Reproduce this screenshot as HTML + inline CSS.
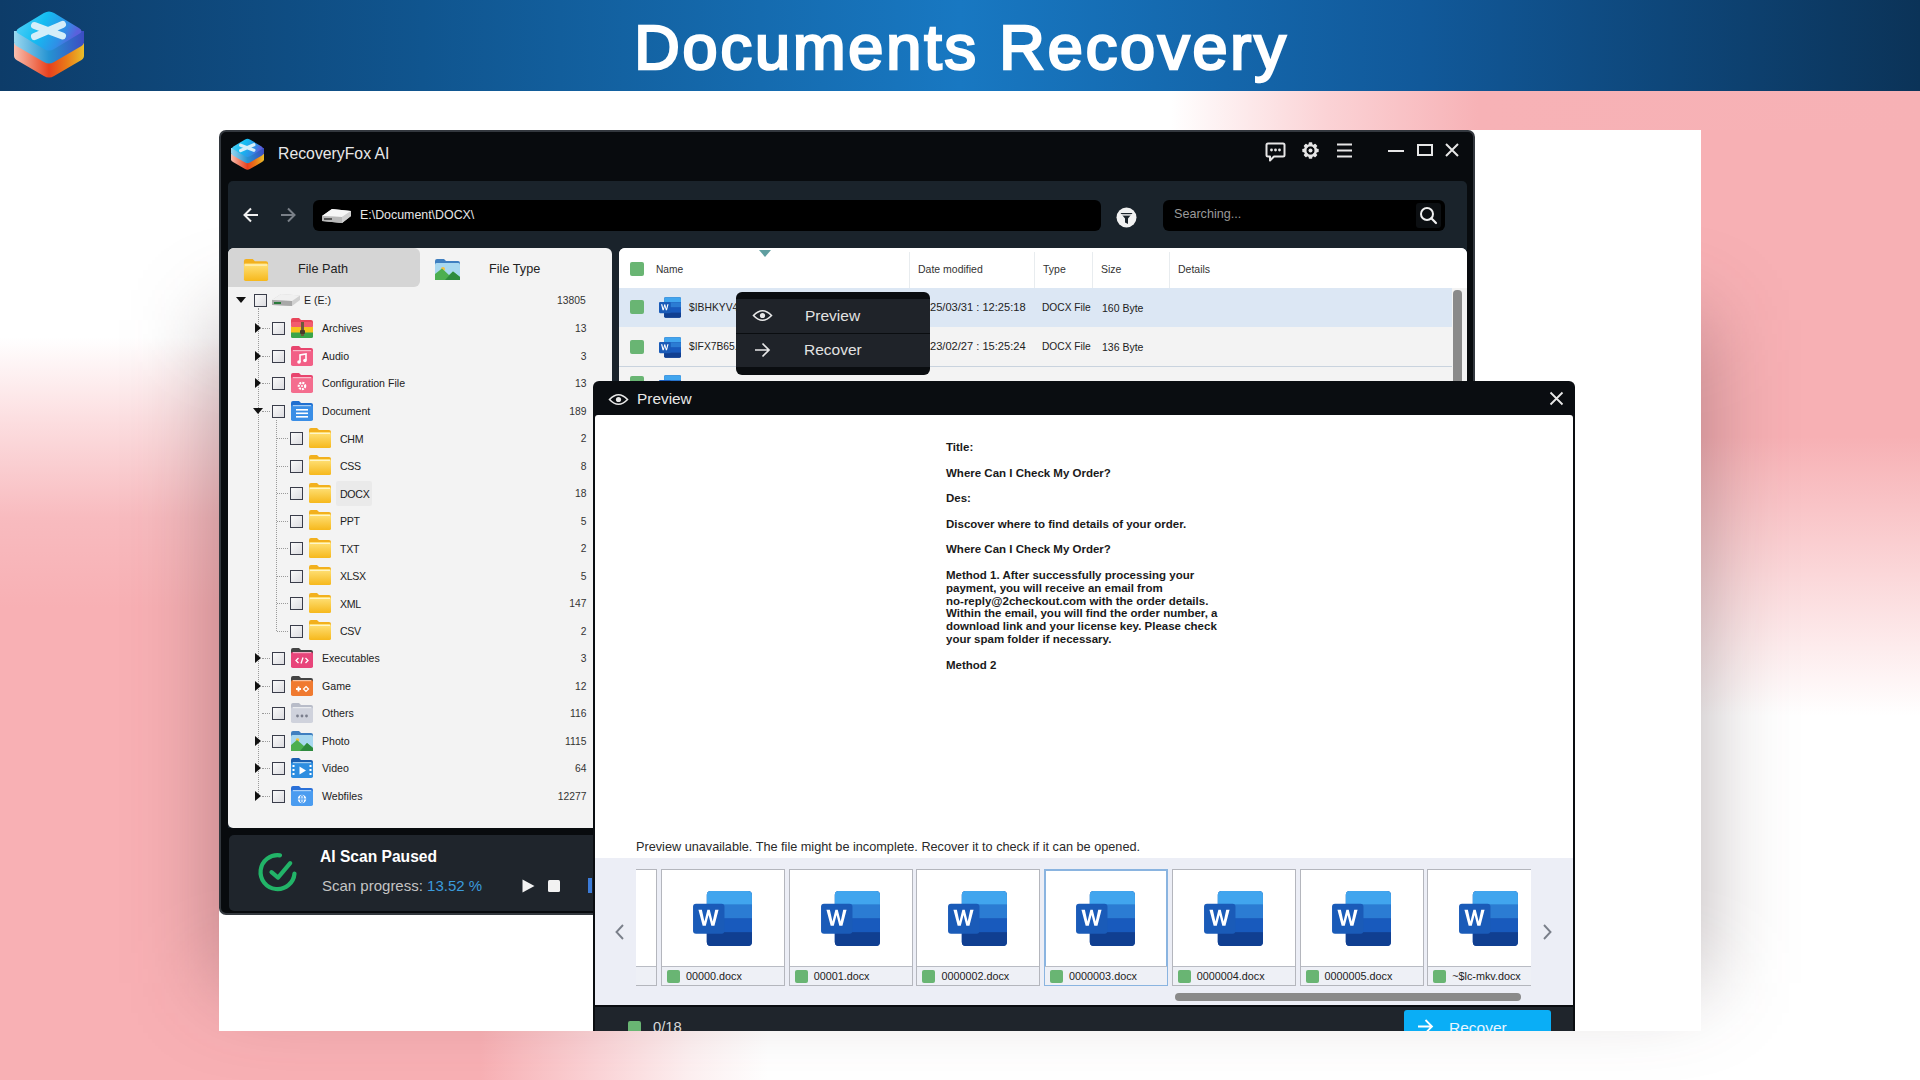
<!DOCTYPE html><html><head><meta charset="utf-8"><style>
*{margin:0;padding:0;box-sizing:border-box}
html,body{width:1920px;height:1080px;overflow:hidden;font-family:"Liberation Sans",sans-serif}
body{position:relative;background:#fff}
.a{position:absolute}
svg{display:block;overflow:visible}
#header{position:absolute;left:0;top:0;width:1920px;height:91px;
background:linear-gradient(90deg,#0d3c69 0%,#10558f 22%,#1878c2 50%,#11599a 74%,#0b3358 100%)}
#title{position:absolute;left:0;top:0;width:1920px;text-align:center;color:#fff;font-weight:normal;font-size:63px;line-height:91px;padding-top:2px;letter-spacing:2.9px;-webkit-text-stroke:2.6px #fff;text-indent:2.9px}
#wbox{position:absolute;left:219px;top:130px;width:1482px;height:901px;background:#fff;overflow:hidden;
}
#inner{position:absolute;left:-219px;top:-130px;width:1920px;height:1080px}
.t{position:absolute;white-space:nowrap;line-height:1}
.cb{position:absolute;width:13px;height:13px;border:1.3px solid #3a3d4a;background:linear-gradient(135deg,#fafafa,#dcdce0)}
.gs{position:absolute;width:14px;height:14px;background:#69b573;border-radius:2px}
</style></head><body>

<svg width="0" height="0" style="position:absolute">
<defs>
 <linearGradient id="lgTop" x1="0" y1="0" x2="1" y2="0.3"><stop offset="0" stop-color="#5cd2f6"/><stop offset="0.45" stop-color="#14bdf2"/><stop offset="0.8" stop-color="#2f8fe6"/><stop offset="1" stop-color="#5a60dc"/></linearGradient>
 <linearGradient id="lgBlue" x1="0" y1="0" x2="1" y2="0"><stop offset="0" stop-color="#9ad8ef"/><stop offset="0.5" stop-color="#2593d2"/><stop offset="1" stop-color="#3c4cc2"/></linearGradient>
 <linearGradient id="lgRed" x1="0" y1="0" x2="1" y2="0"><stop offset="0" stop-color="#f9c0b0"/><stop offset="0.5" stop-color="#e8401c"/><stop offset="0.75" stop-color="#ea7a18"/><stop offset="1" stop-color="#e9be2a"/></linearGradient>
 <linearGradient id="lgBL" x1="0" y1="0" x2="1" y2="0"><stop offset="0" stop-color="#7fd0ee"/><stop offset="1" stop-color="#1f8fd0"/></linearGradient>
 <linearGradient id="lgBR" x1="0" y1="0" x2="1" y2="0"><stop offset="0" stop-color="#2a7cd0"/><stop offset="1" stop-color="#3b55c8"/></linearGradient>
 <linearGradient id="lgRL" x1="0" y1="0" x2="1" y2="0"><stop offset="0" stop-color="#f7b0a0"/><stop offset="1" stop-color="#e03a10"/></linearGradient>
 <linearGradient id="lgRR" x1="0" y1="0" x2="1" y2="0"><stop offset="0" stop-color="#e85a10"/><stop offset="1" stop-color="#e8b020"/></linearGradient>
 <linearGradient id="lgFold" x1="0" y1="0" x2="0" y2="1"><stop offset="0" stop-color="#ffe27a"/><stop offset="1" stop-color="#f6b81c"/></linearGradient>
 <linearGradient id="lgDrive" x1="0" y1="0" x2="0" y2="1"><stop offset="0" stop-color="#f4f4f4"/><stop offset="1" stop-color="#bdbdbd"/></linearGradient>
 <symbol id="logo" viewBox="0 0 70 70">
  <path d="M0 33 L0 46 Q0 49 5.1 51.5 L29.9 66 Q35 69 40.1 66 L64.9 51.5 Q70 49 70 46 L70 33 Z" fill="url(#lgRed)"/>
  <path d="M0 21 L0 32 Q0 35 5.1 37.5 L29.9 52 Q35 55 40.1 52 L64.9 37.5 Q70 35 70 32 L70 21 Z" fill="url(#lgBlue)"/>
  <path d="M5.1 17.9 L29.9 3.1 Q35 0 40.1 3.1 L64.9 17.9 Q70 21 64.9 24.1 L40.1 38.9 Q35 42 29.9 38.9 L5.1 24.1 Q0 21 5.1 17.9 Z" fill="url(#lgTop)"/>
  <path d="M20.5 15.5 L48.5 26 M20.5 26.5 L48.5 14.5" stroke="#d4eef9" stroke-width="7" stroke-linecap="round"/>
 </symbol>
 <symbol id="word" viewBox="0 0 60 56">
  <rect x="14" y="0" width="46" height="56" rx="4" fill="#1a4fa8"/>
  <path d="M14 4 Q14 0 18 0 L56 0 Q60 0 60 4 L60 14 L14 14 Z" fill="#41a5ee"/>
  <rect x="14" y="14" width="46" height="14" fill="#2b7cd3"/>
  <rect x="14" y="28" width="46" height="14" fill="#185abd"/>
  <path d="M14 42 L60 42 L60 52 Q60 56 56 56 L18 56 Q14 56 14 52 Z" fill="#103f91"/>
  <rect x="0" y="13" width="32" height="30.5" rx="3" fill="#1a5bb8"/>
  <path d="M5.5 19 L9 19 L11.6 31 L14.6 19 L17 19 L20 31 L22.6 19 L26 19 L21.8 35.5 L18.6 35.5 L15.8 24.5 L13 35.5 L9.8 35.5 Z" fill="#fff"/>
 </symbol>
 <symbol id="yfold" viewBox="0 0 22 20">
  <path d="M0 2 Q0 0 2 0 L8 0 L10 2 L20 2 Q22 2 22 4 L22 6 L0 6 Z" fill="#f2b01e"/>
  <path d="M0 5 Q0 4 1.5 4 L20.5 4 Q22 4 22 5.5 L22 18.5 Q22 20 20.5 20 L1.5 20 Q0 20 0 18.5 Z" fill="url(#lgFold)"/>
  <rect x="1" y="5" width="20" height="1" fill="#fff5c8"/>
 </symbol>
</defs>
</svg>

<div class="a" style="left:0px;top:91px;width:1920px;height:39px;background:linear-gradient(90deg,#fff 0%,#fff 61%,#fbd3d6 69%,#f7b2b6 77%,#f7b1b5 100%);"></div>
<div class="a" style="left:0px;top:130px;width:219px;height:901px;background:linear-gradient(180deg,#fff 0%,#fff 23%,#fcdfe1 32%,#f8bbbf 43%,#f8b0b4 53%,#f8b0b4 100%);"></div>
<div class="a" style="left:1701px;top:130px;width:219px;height:901px;background:linear-gradient(180deg,#f7b0b4 0%,#f7b0b4 34%,#fff 65%,#fff 100%);"></div>
<div class="a" style="left:0px;top:1031px;width:1920px;height:49px;background:linear-gradient(90deg,#f8b0b4 0%,#f8b0b4 25%,#fbd3d6 31%,#fdf0f1 36%,#fff 40%,#fff 100%);"></div>
<div class="a" style="left:219px;top:320px;width:1482px;height:663px;background:rgba(60,40,45,0.36);filter:blur(45px)"></div>
<div id="header">
<svg class="a" style="left:14px;top:10px" width="70" height="70"><use href="#logo"/></svg>
<div id="title">Documents Recovery</div></div>
<div id="wbox"><div id="inner">
<div class="a" style="left:219px;top:130px;width:1256px;height:785px;background:#080b0e;border:2px solid #33383e;border-radius:7px"></div>
<svg class="a" style="left:231px;top:138px" width="33" height="33"><use href="#logo"/></svg>
<div class="t" style="left:278px;top:146px;font-size:15.8px;color:#e8e8e8;">RecoveryFox AI</div>
<svg class="a" style="left:1265px;top:142px" width="21" height="20" viewBox="0 0 21 20"><path d="M3 1.5 H18 Q19.5 1.5 19.5 3 V13 Q19.5 14.5 18 14.5 H9 L5 18.5 V14.5 H3 Q1.5 14.5 1.5 13 V3 Q1.5 1.5 3 1.5 Z" fill="none" stroke="#e6e6e6" stroke-width="2" stroke-linejoin="round"/><circle cx="6.5" cy="8" r="1.4" fill="#e6e6e6"/><circle cx="10.5" cy="8" r="1.4" fill="#e6e6e6"/><circle cx="14.5" cy="8" r="1.4" fill="#e6e6e6"/></svg>
<svg class="a" style="left:1302px;top:142px" width="17" height="17" viewBox="0 0 17 17"><g transform="translate(8.5,8.5)"><rect x="-1.8" y="-8.2" width="3.6" height="4" rx="0.8" fill="#e6e6e6" transform="rotate(0)"/><rect x="-1.8" y="-8.2" width="3.6" height="4" rx="0.8" fill="#e6e6e6" transform="rotate(45)"/><rect x="-1.8" y="-8.2" width="3.6" height="4" rx="0.8" fill="#e6e6e6" transform="rotate(90)"/><rect x="-1.8" y="-8.2" width="3.6" height="4" rx="0.8" fill="#e6e6e6" transform="rotate(135)"/><rect x="-1.8" y="-8.2" width="3.6" height="4" rx="0.8" fill="#e6e6e6" transform="rotate(180)"/><rect x="-1.8" y="-8.2" width="3.6" height="4" rx="0.8" fill="#e6e6e6" transform="rotate(225)"/><rect x="-1.8" y="-8.2" width="3.6" height="4" rx="0.8" fill="#e6e6e6" transform="rotate(270)"/><rect x="-1.8" y="-8.2" width="3.6" height="4" rx="0.8" fill="#e6e6e6" transform="rotate(315)"/><circle r="5.4" fill="none" stroke="#e6e6e6" stroke-width="2.4"/><circle r="2" fill="#e6e6e6"/></g></svg>
<svg class="a" style="left:1337px;top:143px" width="16" height="15" viewBox="0 0 16 15"><rect x="0" y="0.5" width="15" height="2" fill="#e6e6e6"/><rect x="0" y="6.5" width="15" height="2" fill="#e6e6e6"/><rect x="0" y="12.5" width="15" height="2" fill="#e6e6e6"/></svg>
<div class="a" style="left:1388px;top:150px;width:16px;height:2px;background:#e6e6e6;"></div>
<div class="a" style="left:1417px;top:144px;width:16px;height:12px;background:transparent;border:2px solid #e6e6e6"></div>
<svg class="a" style="left:1445px;top:143px" width="14" height="14" viewBox="0 0 14 14"><path d="M1 1 L13 13 M13 1 L1 13" stroke="#e6e6e6" stroke-width="2"/></svg>
<div class="a" style="left:228px;top:181px;width:1239px;height:647px;background:#1a232b;border-radius:5px 5px 0 0"></div>
<svg class="a" style="left:243px;top:207px" width="16" height="16" viewBox="0 0 16 16"><path d="M15 8 H2 M8 1.5 L1.5 8 L8 14.5" fill="none" stroke="#f0f0f0" stroke-width="2"/></svg>
<svg class="a" style="left:280px;top:207px" width="16" height="16" viewBox="0 0 16 16"><path d="M1 8 H14 M8 1.5 L14.5 8 L8 14.5" fill="none" stroke="#7a8088" stroke-width="2"/></svg>
<div class="a" style="left:313px;top:200px;width:788px;height:31px;background:#000;border-radius:6px"></div>
<svg class="a" style="left:321px;top:207px" width="31" height="17" viewBox="0 0 31 17"><path d="M1 9 L11 2 L30 4 L30 9 L21 16 L1 14 Z" fill="#d8d8d8"/><path d="M1 9 L11 2 L30 4 L21 10 Z" fill="#f6f6f6"/><path d="M1 9 L21 10 L21 16 L1 14 Z" fill="#b8b8b8"/><path d="M21 10 L30 4 L30 9 L21 16 Z" fill="#cfcfcf"/><rect x="3" y="11" width="8" height="2" fill="#555"/></svg>
<div class="t" style="left:360px;top:209px;font-size:12.4px;color:#e6e6e6;">E:\Document\DOCX\</div>
<svg class="a" style="left:1116px;top:207px" width="21" height="21" viewBox="0 0 21 21"><circle cx="10.5" cy="10.5" r="10" fill="#f2f2f2"/><path d="M4.5 6 H16.5 L12 11.5 V17 L9 15.5 V11.5 Z" fill="#1b232a"/><rect x="5" y="7.2" width="11" height="1.4" fill="#f2f2f2"/></svg>
<div class="a" style="left:1163px;top:200px;width:282px;height:31px;background:#000;border-radius:6px"></div>
<div class="a" style="left:1416px;top:203px;width:25px;height:25px;background:#0c0f12;border-radius:3px"></div>
<div class="t" style="left:1174px;top:208px;font-size:12.6px;color:#9a9a9a;">Searching...</div>
<svg class="a" style="left:1419px;top:206px" width="19" height="19" viewBox="0 0 19 19"><circle cx="8" cy="8" r="6" fill="none" stroke="#f0f0f0" stroke-width="2"/><path d="M12.3 12.3 L17 17" stroke="#f0f0f0" stroke-width="2.2" stroke-linecap="round"/></svg>
<div class="a" style="left:228px;top:248px;width:384px;height:580px;background:#f3f3f3;border-radius:6px 6px 0 5px"></div>
<div class="a" style="left:228px;top:248px;width:192px;height:39px;background:#d5d5d5;border-radius:6px 6px 6px 0"></div>
<svg class="a" style="left:243px;top:259px" width="26" height="22"><use href="#yfold"/></svg>
<div class="t" style="left:298px;top:262.5px;font-size:12.7px;color:#222;">File Path</div>
<svg class="a" style="left:435px;top:259px" width="25" height="21" viewBox="0 0 25 21"><path d="M0 2 Q0 0 2 0 L9 0 L11 2 L23 2 Q25 2 25 4 L25 6 L0 6 Z" fill="#3f7fc0"/><rect x="0" y="4" width="25" height="17" rx="1.5" fill="#a8d8f0"/><circle cx="8" cy="10" r="2" fill="#f6c342"/><path d="M0 21 L0 15 L7 9.5 L14 16 L18 12.5 L25 18 L25 21 Z" fill="#4caf50"/><path d="M10 21 L18 12.5 L25 18 L25 21 Z" fill="#2e8b3e"/></svg>
<div class="t" style="left:489px;top:262.5px;font-size:12.7px;color:#222;">File Type</div>
<div class="a" style="left:258px;top:308px;width:0;height:488px;border-left:1px dotted #9a9a9a"></div>
<div class="a" style="left:276px;top:420px;width:0;height:211px;border-left:1px dotted #9a9a9a"></div>
<svg class="a" style="left:236px;top:297px" width="10" height="6" viewBox="0 0 10 6"><path d="M0 0 L10 0 L5 6 Z" fill="#111"/></svg>
<div class="cb" style="left:254px;top:294px"></div>
<svg class="a" style="left:271px;top:292px" width="30" height="16" viewBox="0 0 30 16"><path d="M1 8 L10 2 L29 3.5 L29 8 L21 14 L1 13 Z" fill="#d0d0d0"/><path d="M1 8 L10 2 L29 3.5 L21 9 Z" fill="#f0f0f0"/><path d="M1 8 L21 9 L21 14 L1 13 Z" fill="#a8a8a8"/><rect x="3" y="10" width="7" height="2" fill="#2a7a3a"/></svg>
<div class="t" style="left:304px;top:295px;font-size:10.6px;color:#222;">E (E:)</div>
<div class="t" style="left:557px;top:296px;font-size:10.3px;color:#333;">13805</div>
<svg class="a" style="left:255px;top:323.0px" width="6" height="10" viewBox="0 0 6 10"><path d="M0 0 L6 5 L0 10 Z" fill="#111"/></svg>
<div class="a" style="left:262px;top:328.0px;width:8px;border-top:1px dotted #9a9a9a"></div>
<div class="cb" style="left:272px;top:322.0px"></div>
<svg class="a" style="left:291px;top:318.0px" width="22" height="20" viewBox="0 0 22 20"><path d="M0 2 Q0 0 2 0 L8 0 L10 2 L20 2 Q22 2 22 4 L22 7 L0 7 Z" fill="#e8455a"/><rect x="0" y="4" width="22" height="5.5" rx="1.5" fill="#f25c6e"/><rect x="0" y="9" width="22" height="6" fill="#f6c21c"/><path d="M0 14.5 H22 V18.5 Q22 20 20.5 20 H1.5 Q0 20 0 18.5 Z" fill="#3aa548"/><rect x="10" y="4" width="3" height="14" fill="#6b5a3a"/><rect x="9" y="12" width="5" height="4" rx="1" fill="#4a3a2a"/></svg>
<div class="t" style="left:322px;top:323.0px;font-size:10.6px;color:#222;">Archives</div>
<div class="t" style="right:1333.5px;top:324.0px;font-size:10.3px;color:#333">13</div>
<svg class="a" style="left:255px;top:350.5px" width="6" height="10" viewBox="0 0 6 10"><path d="M0 0 L6 5 L0 10 Z" fill="#111"/></svg>
<div class="a" style="left:262px;top:355.5px;width:8px;border-top:1px dotted #9a9a9a"></div>
<div class="cb" style="left:272px;top:349.5px"></div>
<svg class="a" style="left:291px;top:345.5px" width="22" height="20" viewBox="0 0 22 20"><path d="M0 2 Q0 0 2 0 L8 0 L10 2 L20 2 Q22 2 22 4 L22 7 L0 7 Z" fill="#e8456e"/><rect x="0" y="4" width="22" height="16" rx="1.8" fill="#f25f86"/><rect x="2" y="4" width="18" height="1.2" fill="#ffffff" opacity="0.55"/><path d="M9 16 V9 L15 8 V14" fill="none" stroke="#fff" stroke-width="1.6"/><circle cx="8" cy="16" r="1.8" fill="#fff"/><circle cx="14" cy="14.5" r="1.8" fill="#fff"/></svg>
<div class="t" style="left:322px;top:350.5px;font-size:10.6px;color:#222;">Audio</div>
<div class="t" style="right:1333.5px;top:351.5px;font-size:10.3px;color:#333">3</div>
<svg class="a" style="left:255px;top:378.0px" width="6" height="10" viewBox="0 0 6 10"><path d="M0 0 L6 5 L0 10 Z" fill="#111"/></svg>
<div class="a" style="left:262px;top:383.0px;width:8px;border-top:1px dotted #9a9a9a"></div>
<div class="cb" style="left:272px;top:377.0px"></div>
<svg class="a" style="left:291px;top:373.0px" width="22" height="20" viewBox="0 0 22 20"><path d="M0 2 Q0 0 2 0 L8 0 L10 2 L20 2 Q22 2 22 4 L22 7 L0 7 Z" fill="#e8456e"/><rect x="0" y="4" width="22" height="16" rx="1.8" fill="#f46d8e"/><rect x="2" y="4" width="18" height="1.2" fill="#ffffff" opacity="0.55"/><circle cx="11" cy="13" r="3.2" fill="none" stroke="#fff" stroke-width="2.2" stroke-dasharray="2 1"/><circle cx="11" cy="13" r="1" fill="#fff"/></svg>
<div class="t" style="left:322px;top:378.0px;font-size:10.6px;color:#222;">Configuration File</div>
<div class="t" style="right:1333.5px;top:379.0px;font-size:10.3px;color:#333">13</div>
<svg class="a" style="left:253px;top:407.5px" width="10" height="6" viewBox="0 0 10 6"><path d="M0 0 L10 0 L5 6 Z" fill="#111"/></svg>
<div class="a" style="left:262px;top:410.5px;width:8px;border-top:1px dotted #9a9a9a"></div>
<div class="cb" style="left:272px;top:404.5px"></div>
<svg class="a" style="left:291px;top:400.5px" width="22" height="20" viewBox="0 0 22 20"><path d="M0 2 Q0 0 2 0 L8 0 L10 2 L20 2 Q22 2 22 4 L22 7 L0 7 Z" fill="#1f6fd0"/><rect x="0" y="4" width="22" height="16" rx="1.8" fill="#3a8ee6"/><rect x="2" y="4" width="18" height="1.2" fill="#ffffff" opacity="0.55"/><rect x="5" y="8" width="12" height="1.6" fill="#fff"/><rect x="5" y="11.5" width="12" height="1.6" fill="#fff"/><rect x="5" y="15" width="12" height="1.6" fill="#fff"/></svg>
<div class="t" style="left:322px;top:405.5px;font-size:10.6px;color:#222;">Document</div>
<div class="t" style="right:1333.5px;top:406.5px;font-size:10.3px;color:#333">189</div>
<div class="a" style="left:277px;top:438.0px;width:11px;border-top:1px dotted #9a9a9a"></div>
<div class="cb" style="left:290px;top:432.0px"></div>
<svg class="a" style="left:309px;top:428px" width="22" height="20"><use href="#yfold"/></svg>
<div class="t" style="left:340px;top:433.5px;font-size:10.6px;color:#222;letter-spacing:-0.3px">CHM</div>
<div class="t" style="right:1333.5px;top:434.0px;font-size:10.3px;color:#333">2</div>
<div class="a" style="left:277px;top:465.5px;width:11px;border-top:1px dotted #9a9a9a"></div>
<div class="cb" style="left:290px;top:459.5px"></div>
<svg class="a" style="left:309px;top:455px" width="22" height="20"><use href="#yfold"/></svg>
<div class="t" style="left:340px;top:461.0px;font-size:10.6px;color:#222;letter-spacing:-0.3px">CSS</div>
<div class="t" style="right:1333.5px;top:461.5px;font-size:10.3px;color:#333">8</div>
<div class="a" style="left:277px;top:493.0px;width:11px;border-top:1px dotted #9a9a9a"></div>
<div class="cb" style="left:290px;top:487.0px"></div>
<svg class="a" style="left:309px;top:483px" width="22" height="20"><use href="#yfold"/></svg>
<div class="t" style="left:340px;top:488.5px;font-size:10.6px;color:#222;letter-spacing:-0.3px">DOCX</div>
<div class="t" style="right:1333.5px;top:489.0px;font-size:10.3px;color:#333">18</div>
<div class="a" style="left:277px;top:520.5px;width:11px;border-top:1px dotted #9a9a9a"></div>
<div class="cb" style="left:290px;top:514.5px"></div>
<svg class="a" style="left:309px;top:510px" width="22" height="20"><use href="#yfold"/></svg>
<div class="t" style="left:340px;top:516.0px;font-size:10.6px;color:#222;letter-spacing:-0.3px">PPT</div>
<div class="t" style="right:1333.5px;top:516.5px;font-size:10.3px;color:#333">5</div>
<div class="a" style="left:277px;top:548.0px;width:11px;border-top:1px dotted #9a9a9a"></div>
<div class="cb" style="left:290px;top:542.0px"></div>
<svg class="a" style="left:309px;top:538px" width="22" height="20"><use href="#yfold"/></svg>
<div class="t" style="left:340px;top:543.5px;font-size:10.6px;color:#222;letter-spacing:-0.3px">TXT</div>
<div class="t" style="right:1333.5px;top:544.0px;font-size:10.3px;color:#333">2</div>
<div class="a" style="left:277px;top:575.5px;width:11px;border-top:1px dotted #9a9a9a"></div>
<div class="cb" style="left:290px;top:569.5px"></div>
<svg class="a" style="left:309px;top:565px" width="22" height="20"><use href="#yfold"/></svg>
<div class="t" style="left:340px;top:571.0px;font-size:10.6px;color:#222;letter-spacing:-0.3px">XLSX</div>
<div class="t" style="right:1333.5px;top:571.5px;font-size:10.3px;color:#333">5</div>
<div class="a" style="left:277px;top:603.0px;width:11px;border-top:1px dotted #9a9a9a"></div>
<div class="cb" style="left:290px;top:597.0px"></div>
<svg class="a" style="left:309px;top:593px" width="22" height="20"><use href="#yfold"/></svg>
<div class="t" style="left:340px;top:598.5px;font-size:10.6px;color:#222;letter-spacing:-0.3px">XML</div>
<div class="t" style="right:1333.5px;top:599.0px;font-size:10.3px;color:#333">147</div>
<div class="a" style="left:277px;top:630.5px;width:11px;border-top:1px dotted #9a9a9a"></div>
<div class="cb" style="left:290px;top:624.5px"></div>
<svg class="a" style="left:309px;top:620px" width="22" height="20"><use href="#yfold"/></svg>
<div class="t" style="left:340px;top:626.0px;font-size:10.6px;color:#222;letter-spacing:-0.3px">CSV</div>
<div class="t" style="right:1333.5px;top:626.5px;font-size:10.3px;color:#333">2</div>
<svg class="a" style="left:255px;top:653.0px" width="6" height="10" viewBox="0 0 6 10"><path d="M0 0 L6 5 L0 10 Z" fill="#111"/></svg>
<div class="a" style="left:262px;top:658.0px;width:8px;border-top:1px dotted #9a9a9a"></div>
<div class="cb" style="left:272px;top:652.0px"></div>
<svg class="a" style="left:291px;top:648.0px" width="22" height="20" viewBox="0 0 22 20"><path d="M0 2 Q0 0 2 0 L8 0 L10 2 L20 2 Q22 2 22 4 L22 7 L0 7 Z" fill="#444"/><rect x="0" y="4" width="22" height="16" rx="1.8" fill="#e8457a"/><rect x="2" y="4" width="18" height="1.2" fill="#ffffff" opacity="0.55"/><path d="M7.5 10 L5 12.5 L7.5 15 M14.5 10 L17 12.5 L14.5 15 M12 9.5 L10 15.5" fill="none" stroke="#fff" stroke-width="1.3"/></svg>
<div class="t" style="left:322px;top:653.0px;font-size:10.6px;color:#222;">Executables</div>
<div class="t" style="right:1333.5px;top:654.0px;font-size:10.3px;color:#333">3</div>
<svg class="a" style="left:255px;top:680.5px" width="6" height="10" viewBox="0 0 6 10"><path d="M0 0 L6 5 L0 10 Z" fill="#111"/></svg>
<div class="a" style="left:262px;top:685.5px;width:8px;border-top:1px dotted #9a9a9a"></div>
<div class="cb" style="left:272px;top:679.5px"></div>
<svg class="a" style="left:291px;top:675.5px" width="22" height="20" viewBox="0 0 22 20"><path d="M0 2 Q0 0 2 0 L8 0 L10 2 L20 2 Q22 2 22 4 L22 7 L0 7 Z" fill="#444"/><rect x="0" y="4" width="22" height="16" rx="1.8" fill="#f07a30"/><rect x="2" y="4" width="18" height="1.2" fill="#ffffff" opacity="0.55"/><path d="M5 13 H10 M7.5 10.5 V15.5" stroke="#fff" stroke-width="1.8"/><path d="M15 10.5 L17.5 13 L15 15.5 L12.5 13 Z" fill="none" stroke="#fff" stroke-width="1.2"/></svg>
<div class="t" style="left:322px;top:680.5px;font-size:10.6px;color:#222;">Game</div>
<div class="t" style="right:1333.5px;top:681.5px;font-size:10.3px;color:#333">12</div>
<div class="a" style="left:262px;top:713.0px;width:8px;border-top:1px dotted #9a9a9a"></div>
<div class="cb" style="left:272px;top:707.0px"></div>
<svg class="a" style="left:291px;top:703.0px" width="22" height="20" viewBox="0 0 22 20"><path d="M0 2 Q0 0 2 0 L8 0 L10 2 L20 2 Q22 2 22 4 L22 7 L0 7 Z" fill="#b8bcc8"/><rect x="0" y="4" width="22" height="16" rx="1.8" fill="#cfd2dc"/><rect x="2" y="4" width="18" height="1.2" fill="#ffffff" opacity="0.55"/><circle cx="6.5" cy="13" r="1.4" fill="#7a7e8c"/><circle cx="11" cy="13" r="1.4" fill="#7a7e8c"/><circle cx="15.5" cy="13" r="1.4" fill="#7a7e8c"/></svg>
<div class="t" style="left:322px;top:708.0px;font-size:10.6px;color:#222;">Others</div>
<div class="t" style="right:1333.5px;top:709.0px;font-size:10.3px;color:#333">116</div>
<svg class="a" style="left:255px;top:735.5px" width="6" height="10" viewBox="0 0 6 10"><path d="M0 0 L6 5 L0 10 Z" fill="#111"/></svg>
<div class="a" style="left:262px;top:740.5px;width:8px;border-top:1px dotted #9a9a9a"></div>
<div class="cb" style="left:272px;top:734.5px"></div>
<svg class="a" style="left:291px;top:730.5px" width="22" height="20" viewBox="0 0 22 20"><path d="M0 2 Q0 0 2 0 L8 0 L10 2 L20 2 Q22 2 22 4 L22 7 L0 7 Z" fill="#3f7fc0"/><rect x="0" y="4" width="22" height="16" rx="1.5" fill="#a8d8f0"/><circle cx="6.5" cy="9" r="1.8" fill="#f6c342"/><path d="M0 20 L0 14 L6 9 L13 15 L16 12 L22 17 L22 20 Z" fill="#4caf50"/><path d="M9 20 L16 12 L22 17 L22 20 Z" fill="#2e8b3e"/></svg>
<div class="t" style="left:322px;top:735.5px;font-size:10.6px;color:#222;">Photo</div>
<div class="t" style="right:1333.5px;top:736.5px;font-size:10.3px;color:#333">1115</div>
<svg class="a" style="left:255px;top:763.0px" width="6" height="10" viewBox="0 0 6 10"><path d="M0 0 L6 5 L0 10 Z" fill="#111"/></svg>
<div class="a" style="left:262px;top:768.0px;width:8px;border-top:1px dotted #9a9a9a"></div>
<div class="cb" style="left:272px;top:762.0px"></div>
<svg class="a" style="left:291px;top:758.0px" width="22" height="20" viewBox="0 0 22 20"><path d="M0 2 Q0 0 2 0 L8 0 L10 2 L20 2 Q22 2 22 4 L22 7 L0 7 Z" fill="#1a5fb0"/><rect x="0" y="4" width="22" height="16" rx="1.8" fill="#2e8ee0"/><rect x="2" y="4" width="18" height="1.2" fill="#ffffff" opacity="0.55"/><path d="M8.5 8.5 L15 12.5 L8.5 16.5 Z" fill="#fff"/><rect x="1.5" y="7" width="2" height="2" fill="#fff"/><rect x="1.5" y="11" width="2" height="2" fill="#fff"/><rect x="1.5" y="15" width="2" height="2" fill="#fff"/><rect x="18.5" y="7" width="2" height="2" fill="#fff"/><rect x="18.5" y="11" width="2" height="2" fill="#fff"/><rect x="18.5" y="15" width="2" height="2" fill="#fff"/></svg>
<div class="t" style="left:322px;top:763.0px;font-size:10.6px;color:#222;">Video</div>
<div class="t" style="right:1333.5px;top:764.0px;font-size:10.3px;color:#333">64</div>
<svg class="a" style="left:255px;top:790.5px" width="6" height="10" viewBox="0 0 6 10"><path d="M0 0 L6 5 L0 10 Z" fill="#111"/></svg>
<div class="a" style="left:262px;top:795.5px;width:8px;border-top:1px dotted #9a9a9a"></div>
<div class="cb" style="left:272px;top:789.5px"></div>
<svg class="a" style="left:291px;top:785.5px" width="22" height="20" viewBox="0 0 22 20"><path d="M0 2 Q0 0 2 0 L8 0 L10 2 L20 2 Q22 2 22 4 L22 7 L0 7 Z" fill="#2a70d8"/><rect x="0" y="4" width="22" height="16" rx="1.8" fill="#4a9cf0"/><rect x="2" y="4" width="18" height="1.2" fill="#ffffff" opacity="0.55"/><circle cx="11" cy="13" r="4.2" fill="#fff"/><path d="M6.8 13 H15.2 M11 8.8 V17.2" stroke="#4a9cf0" stroke-width="0.9"/><ellipse cx="11" cy="13" rx="1.8" ry="4.2" fill="none" stroke="#4a9cf0" stroke-width="0.9"/></svg>
<div class="t" style="left:322px;top:790.5px;font-size:10.6px;color:#222;">Webfiles</div>
<div class="t" style="right:1333.5px;top:791.5px;font-size:10.3px;color:#333">12277</div>
<div class="a" style="left:336px;top:481px;width:36px;height:25px;background:rgba(0,0,0,0.035);border-radius:2px"></div>
<div class="a" style="left:619px;top:248px;width:848px;height:580px;background:#f3f3f3;border-radius:6px 6px 0 0;overflow:hidden">
<div class="a" style="left:0px;top:0px;width:848px;height:40px;background:#fff;"></div>
<div class="a" style="left:0px;top:40px;width:833px;height:39px;background:#dce7f4;"></div>
<div class="a" style="left:0px;top:118px;width:833px;height:1px;background:#c9d3de;"></div>
<div class="a" style="left:290px;top:4px;width:1px;height:36px;background:#e8ecef;"></div>
<div class="a" style="left:415px;top:4px;width:1px;height:36px;background:#e8ecef;"></div>
<div class="a" style="left:473px;top:4px;width:1px;height:36px;background:#e8ecef;"></div>
<div class="a" style="left:550px;top:4px;width:1px;height:36px;background:#e8ecef;"></div>
<svg class="a" style="left:140px;top:2px" width="12" height="7" viewBox="0 0 12 7"><path d="M0 0 L12 0 L6 7 Z" fill="#5f9ea0"/></svg>
<div class="a" style="left:834px;top:42px;width:9px;height:200px;background:#8a8a8a;border-radius:4px"></div>
</div>
<div class="gs" style="left:630px;top:262px"></div>
<div class="t" style="left:656px;top:264.5px;font-size:10.2px;color:#333;">Name</div>
<div class="t" style="left:918px;top:264px;font-size:10.5px;color:#333;">Date modified</div>
<div class="t" style="left:1043px;top:264px;font-size:10.5px;color:#333;">Type</div>
<div class="t" style="left:1101px;top:264px;font-size:10.5px;color:#333;">Size</div>
<div class="t" style="left:1178px;top:264px;font-size:10.5px;color:#333;">Details</div>
<div class="gs" style="left:630px;top:300px"></div>
<svg class="a" style="left:659px;top:297px" width="22" height="21"><use href="#word"/></svg>
<div class="t" style="left:689px;top:302.5px;font-size:10.3px;color:#222;">$IBHKYV4.</div>
<div class="t" style="left:930px;top:301.5px;font-size:11.1px;color:#222;">25/03/31 : 12:25:18</div>
<div class="t" style="left:1042px;top:302.5px;font-size:10.2px;color:#222;">DOCX File</div>
<div class="t" style="left:1102px;top:302.5px;font-size:10.5px;color:#222;">160 Byte</div>
<div class="gs" style="left:630px;top:339.5px"></div>
<svg class="a" style="left:659px;top:336.5px" width="22" height="21"><use href="#word"/></svg>
<div class="t" style="left:689px;top:342.0px;font-size:10.3px;color:#222;">$IFX7B65.</div>
<div class="t" style="left:930px;top:341.0px;font-size:11.1px;color:#222;">23/02/27 : 15:25:24</div>
<div class="t" style="left:1042px;top:342.0px;font-size:10.2px;color:#222;">DOCX File</div>
<div class="t" style="left:1102px;top:342.0px;font-size:10.5px;color:#222;">136 Byte</div>
<div class="gs" style="left:630px;top:376px"></div>
<svg class="a" style="left:659px;top:375px" width="22" height="21"><use href="#word"/></svg>
<div class="a" style="left:736px;top:292px;width:194px;height:83px;background:#0a0d10;border-radius:6px"></div>
<div class="a" style="left:736px;top:299px;width:194px;height:33.5px;background:#1f2329;"></div>
<div class="a" style="left:736px;top:334px;width:194px;height:33px;background:#1f2329;"></div>
<svg class="a" style="left:752px;top:308px" width="21" height="15" viewBox="0 0 21 15"><path d="M1.5 7.5 Q10.5 -2 19.5 7.5 Q10.5 17 1.5 7.5 Z" fill="none" stroke="#e8e8e8" stroke-width="1.6"/><circle cx="10.5" cy="7.5" r="2.6" fill="#e8e8e8"/></svg>
<div class="t" style="left:805px;top:308px;font-size:15.5px;color:#e2e2e2;">Preview</div>
<svg class="a" style="left:754px;top:342px" width="17" height="16" viewBox="0 0 17 16"><path d="M1 8 H15 M8.5 1.5 L15 8 L8.5 14.5" fill="none" stroke="#e8e8e8" stroke-width="1.7"/></svg>
<div class="t" style="left:804px;top:342px;font-size:15.5px;color:#e2e2e2;">Recover</div>
<div class="a" style="left:229px;top:835px;width:380px;height:76px;background:#1f252c;border-radius:5px"></div>
<svg class="a" style="left:258px;top:853px" width="40" height="40" viewBox="0 0 40 40"><path d="M22 2.3 A17 17 0 1 0 36.5 20.5" fill="none" stroke="#22b468" stroke-width="4.2" stroke-linecap="round"/><path d="M13.5 19.2 L20 24.6 L32.2 10.2" fill="none" stroke="#22b468" stroke-width="4.2" stroke-linecap="round" stroke-linejoin="round"/></svg>
<div class="t" style="left:320px;top:848.5px;font-size:15.6px;color:#fff;font-weight:bold;">AI Scan Paused</div>
<div class="t" style="left:322px;top:878px;font-size:15px;color:#c4c4c4;">Scan progress: <span style="color:#3b9bdc">13.52 %</span></div>
<svg class="a" style="left:522px;top:879px" width="13" height="14" viewBox="0 0 13 14"><path d="M0.5 0.5 L12.5 7 L0.5 13.5 Z" fill="#f2f2f2"/></svg>
<div class="a" style="left:548px;top:880px;width:12px;height:12px;background:#f2f2f2;border-radius:1.5px"></div>
<div class="a" style="left:588px;top:878px;width:4px;height:15px;background:#3b7bd8;"></div>
<div class="a" style="left:593px;top:381px;width:982px;height:700px;background:#0a0d11;border-radius:6px 6px 0 0"></div>
<svg class="a" style="left:608px;top:392px" width="21" height="15" viewBox="0 0 21 15"><path d="M1.5 7.5 Q10.5 -2 19.5 7.5 Q10.5 17 1.5 7.5 Z" fill="none" stroke="#e8e8e8" stroke-width="1.6"/><circle cx="10.5" cy="7.5" r="2.6" fill="#e8e8e8"/></svg>
<div class="t" style="left:637px;top:391px;font-size:15.4px;color:#e8e8e8;">Preview</div>
<svg class="a" style="left:1550px;top:392px" width="13" height="13" viewBox="0 0 13 13"><path d="M0.5 0.5 L12.5 12.5 M12.5 0.5 L0.5 12.5" stroke="#e8e8e8" stroke-width="1.8"/></svg>
<div class="a" style="left:595px;top:415px;width:978px;height:443px;background:#fff;border-radius:3px 3px 0 0"></div>
<div class="t" style="left:946px;top:442px;font-size:11.5px;color:#1a1a1a;font-weight:bold;">Title:</div>
<div class="t" style="left:946px;top:467.5px;font-size:11.5px;color:#1a1a1a;font-weight:bold;">Where Can I Check My Order?</div>
<div class="t" style="left:946px;top:493px;font-size:11.5px;color:#1a1a1a;font-weight:bold;">Des:</div>
<div class="t" style="left:946px;top:518.5px;font-size:11.5px;color:#1a1a1a;font-weight:bold;">Discover where to find details of your order.</div>
<div class="t" style="left:946px;top:544px;font-size:11.5px;color:#1a1a1a;font-weight:bold;">Where Can I Check My Order?</div>
<div class="t" style="left:946px;top:570px;font-size:11.5px;color:#1a1a1a;font-weight:bold;">Method 1. After successfully processing your</div>
<div class="t" style="left:946px;top:582.75px;font-size:11.5px;color:#1a1a1a;font-weight:bold;">payment, you will receive an email from</div>
<div class="t" style="left:946px;top:595.5px;font-size:11.5px;color:#1a1a1a;font-weight:bold;">no-reply@2checkout.com with the order details.</div>
<div class="t" style="left:946px;top:608.25px;font-size:11.5px;color:#1a1a1a;font-weight:bold;">Within the email, you will find the order number, a</div>
<div class="t" style="left:946px;top:621px;font-size:11.5px;color:#1a1a1a;font-weight:bold;">download link and your license key. Please check</div>
<div class="t" style="left:946px;top:633.75px;font-size:11.5px;color:#1a1a1a;font-weight:bold;">your spam folder if necessary.</div>
<div class="t" style="left:946px;top:659.5px;font-size:11.5px;color:#1a1a1a;font-weight:bold;">Method 2</div>
<div class="t" style="left:636px;top:840.5px;font-size:12.7px;color:#2a2a2a;">Preview unavailable. The file might be incomplete. Recover it to check if it can be opened.</div>
<div class="a" style="left:595px;top:858px;width:978px;height:147px;background:#eceef6;"></div>
<svg class="a" style="left:615px;top:924px" width="9" height="16" viewBox="0 0 9 16"><path d="M8 1 L1.5 8 L8 15" fill="none" stroke="#7a7f8a" stroke-width="1.9"/></svg>
<svg class="a" style="left:1543px;top:924px" width="9" height="16" viewBox="0 0 9 16"><path d="M1 1 L7.5 8 L1 15" fill="none" stroke="#7a7f8a" stroke-width="1.9"/></svg>
<div class="a" style="left:636px;top:866px;width:895px;height:125px;overflow:hidden">
<div class="a" style="left:-102.7px;top:3px;width:124px;height:117px;border:1px solid #b4b6bd;background:#fff"></div>
<div class="a" style="left:-101.7px;top:100px;width:122px;height:19px;background:#eef0f6;border-top:1px solid #b9bcc4"></div>
<div class="a" style="left:25.0px;top:3px;width:124px;height:117px;border:1px solid #b4b6bd;background:#fff"></div>
<div class="a" style="left:26.0px;top:100px;width:122px;height:19px;background:#eef0f6;border-top:1px solid #b9bcc4"></div>
<svg class="a" style="left:57.0px;top:25px" width="59" height="55"><use href="#word"/></svg>
<div class="gs" style="left:31.0px;top:104px;width:13px;height:13px"></div>
<div class="t" style="left:50.0px;top:105px;font-size:10.8px;color:#222">00000.docx</div>
<div class="a" style="left:152.7px;top:3px;width:124px;height:117px;border:1px solid #b4b6bd;background:#fff"></div>
<div class="a" style="left:153.7px;top:100px;width:122px;height:19px;background:#eef0f6;border-top:1px solid #b9bcc4"></div>
<svg class="a" style="left:184.7px;top:25px" width="59" height="55"><use href="#word"/></svg>
<div class="gs" style="left:158.7px;top:104px;width:13px;height:13px"></div>
<div class="t" style="left:177.7px;top:105px;font-size:10.8px;color:#222">00001.docx</div>
<div class="a" style="left:280.4px;top:3px;width:124px;height:117px;border:1px solid #b4b6bd;background:#fff"></div>
<div class="a" style="left:281.4px;top:100px;width:122px;height:19px;background:#eef0f6;border-top:1px solid #b9bcc4"></div>
<svg class="a" style="left:312.4px;top:25px" width="59" height="55"><use href="#word"/></svg>
<div class="gs" style="left:286.4px;top:104px;width:13px;height:13px"></div>
<div class="t" style="left:305.4px;top:105px;font-size:10.8px;color:#222">0000002.docx</div>
<div class="a" style="left:408.1px;top:3px;width:124px;height:117px;border:2px solid #8ab4e0;background:#fff"></div>
<div class="a" style="left:409.1px;top:100px;width:122px;height:19px;background:#eef0f6;border-top:1px solid #b9bcc4"></div>
<svg class="a" style="left:440.1px;top:25px" width="59" height="55"><use href="#word"/></svg>
<div class="gs" style="left:414.1px;top:104px;width:13px;height:13px"></div>
<div class="t" style="left:433.1px;top:105px;font-size:10.8px;color:#222">0000003.docx</div>
<div class="a" style="left:535.8px;top:3px;width:124px;height:117px;border:1px solid #b4b6bd;background:#fff"></div>
<div class="a" style="left:536.8px;top:100px;width:122px;height:19px;background:#eef0f6;border-top:1px solid #b9bcc4"></div>
<svg class="a" style="left:567.8px;top:25px" width="59" height="55"><use href="#word"/></svg>
<div class="gs" style="left:541.8px;top:104px;width:13px;height:13px"></div>
<div class="t" style="left:560.8px;top:105px;font-size:10.8px;color:#222">0000004.docx</div>
<div class="a" style="left:663.5px;top:3px;width:124px;height:117px;border:1px solid #b4b6bd;background:#fff"></div>
<div class="a" style="left:664.5px;top:100px;width:122px;height:19px;background:#eef0f6;border-top:1px solid #b9bcc4"></div>
<svg class="a" style="left:695.5px;top:25px" width="59" height="55"><use href="#word"/></svg>
<div class="gs" style="left:669.5px;top:104px;width:13px;height:13px"></div>
<div class="t" style="left:688.5px;top:105px;font-size:10.8px;color:#222">0000005.docx</div>
<div class="a" style="left:791.2px;top:3px;width:124px;height:117px;border:1px solid #b4b6bd;background:#fff"></div>
<div class="a" style="left:792.2px;top:100px;width:122px;height:19px;background:#eef0f6;border-top:1px solid #b9bcc4"></div>
<svg class="a" style="left:823.2px;top:25px" width="59" height="55"><use href="#word"/></svg>
<div class="gs" style="left:797.2px;top:104px;width:13px;height:13px"></div>
<div class="t" style="left:816.2px;top:105px;font-size:10.8px;color:#222">~$lc-mkv.docx</div>
</div>
<div class="a" style="left:1175px;top:993px;width:346px;height:8px;background:#8a8a8a;border-radius:4px"></div>
<div class="a" style="left:595px;top:1005px;width:978px;height:30px;background:#1f252c;border-top:2px solid #0a0d11"></div>
<div class="gs" style="left:628px;top:1021px;width:13px;height:13px"></div>
<div class="t" style="left:653px;top:1020px;font-size:14.8px;color:#d8d8d8;">0/18</div>
<div class="a" style="left:1404px;top:1010px;width:147px;height:30px;background:#0aaef6;border-radius:3px"></div>
<svg class="a" style="left:1417px;top:1019px" width="17" height="15" viewBox="0 0 17 15"><path d="M1 7.5 H15 M8.5 1 L15 7.5 L8.5 14" fill="none" stroke="#fff" stroke-width="1.8"/></svg>
<div class="t" style="left:1449px;top:1019.5px;font-size:15.5px;color:#e8f6ff;">Recover</div>
</div></div>
</body></html>
